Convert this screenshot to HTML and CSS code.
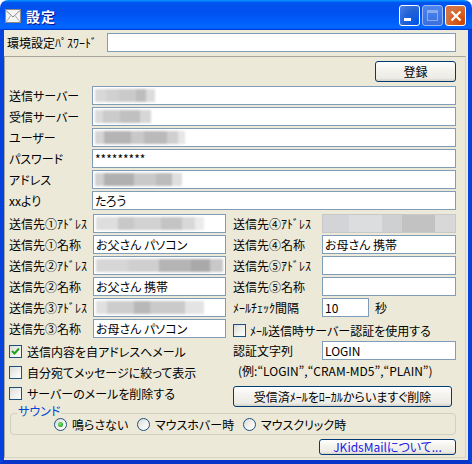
FILE: index.html
```html
<!DOCTYPE html>
<html lang="ja">
<head>
<meta charset="utf-8">
<title>設定</title>
<link rel="stylesheet" href="styles.css">
</head>
<body>
<div class="window">
  <div class="titlebar">
    <svg class="appicon" width="16" height="14" viewBox="0 0 16 14">
      <rect x="0.5" y="0.5" width="15" height="13" fill="#f4f4f4" stroke="#8a8a8a"/>
      <polyline points="1,1.5 8,8 15,1.5" fill="none" stroke="#8a8a8a"/>
      <polyline points="1,13 6,6.5" fill="none" stroke="#b0b0b0"/>
      <polyline points="15,13 10,6.5" fill="none" stroke="#b0b0b0"/>
    </svg>
    <span class="title">設定</span>
    <div class="tbtns">
      <div class="tbtn min"><span class="minbar"></span></div>
      <div class="tbtn max disabled"><span class="maxbox"></span></div>
      <div class="tbtn close">
        <svg width="12" height="12" viewBox="0 0 12 12"><path d="M1.5 1.5 L10.5 10.5 M10.5 1.5 L1.5 10.5" stroke="#fff" stroke-width="2.2" fill="none"/></svg>
      </div>
    </div>
  </div>
  <div class="frame">
    <div class="client">
      <div class="toprow">
        <span class="toplabel">環境設定<span class="hw">ﾊﾟｽﾜｰﾄﾞ</span></span>
        <div class="tb topinput"></div>
      </div>
      <div class="panel">
        <div class="regrow"><div class="btn regbtn">登録</div></div>
        <div class="fields">
          <div class="row"><span class="lbl wide">送信サーバー</span><div class="tb full"><span class="blur b1"></span></div></div>
          <div class="row"><span class="lbl wide">受信サーバー</span><div class="tb full"><span class="blur b2"></span></div></div>
          <div class="row"><span class="lbl wide">ユーザー</span><div class="tb full"><span class="blur b3"></span></div></div>
          <div class="row"><span class="lbl wide">パスワード</span><div class="tb full">*********</div></div>
          <div class="row"><span class="lbl wide">アドレス</span><div class="tb full"><span class="blur b4"></span></div></div>
          <div class="row"><span class="lbl wide">xxより</span><div class="tb full">たろう</div></div>
        </div>
        <div class="cols">
          <div class="col left">
            <div class="row"><span class="lbl lw">送信先①<span class="hw">ｱﾄﾞﾚｽ</span></span><div class="tb half"><span class="blur b5"></span></div></div>
            <div class="row"><span class="lbl lw">送信先①名称</span><div class="tb half">お父さん パソコン</div></div>
            <div class="row"><span class="lbl lw">送信先②<span class="hw">ｱﾄﾞﾚｽ</span></span><div class="tb half"><span class="blur b6"></span></div></div>
            <div class="row"><span class="lbl lw">送信先②名称</span><div class="tb half">お父さん 携帯</div></div>
            <div class="row"><span class="lbl lw">送信先③<span class="hw">ｱﾄﾞﾚｽ</span></span><div class="tb half"><span class="blur b7"></span></div></div>
            <div class="row"><span class="lbl lw">送信先③名称</span><div class="tb half">お母さん パソコン</div></div>
            <div class="checks">
              <label class="cb"><span class="box"><svg width="11" height="11" viewBox="0 0 11 11"><polyline points="2,5 4.5,7.5 9,2.5" fill="none" stroke="#21a121" stroke-width="2"/></svg></span>送信内容を自アドレスへメール</label>
              <label class="cb"><span class="box"></span>自分宛てメッセージに絞って表示</label>
              <label class="cb"><span class="box"></span>サーバーのメールを削除する</label>
            </div>
          </div>
          <div class="col right">
            <div class="row"><span class="lbl rw">送信先④<span class="hw">ｱﾄﾞﾚｽ</span></span><div class="tb rhalf blurbox"></div></div>
            <div class="row"><span class="lbl rw">送信先④名称</span><div class="tb rhalf">お母さん 携帯</div></div>
            <div class="row"><span class="lbl rw">送信先⑤<span class="hw">ｱﾄﾞﾚｽ</span></span><div class="tb rhalf"></div></div>
            <div class="row"><span class="lbl rw">送信先⑤名称</span><div class="tb rhalf"></div></div>
            <div class="row"><span class="lbl rw"><span class="hw">ﾒｰﾙﾁｪｯｸ</span>間隔</span><div class="tb short">10</div><span class="unit">秒</span></div>
            <label class="cb authcb"><span class="box"></span><span class="hw">ﾒｰﾙ</span>送信時サーバー認証を使用する</label>
            <div class="row"><span class="lbl rw">認証文字列</span><div class="tb rhalf">LOGIN</div></div>
            <div class="example">(例:“LOGIN”,“CRAM-MD5”,“PLAIN”)</div>
            <div class="btn delbtn">受信済<span class="hw">ﾒｰﾙ</span>を<span class="hw">ﾛｰｶﾙ</span>からいますぐ削除</div>
          </div>
        </div>
        <div class="group">
          <span class="legend">サウンド</span>
          <label class="radio r1"><span class="dot on"></span>鳴らさない</label>
          <label class="radio r2"><span class="dot"></span>マウスホバー時</label>
          <label class="radio r3"><span class="dot"></span>マウスクリック時</label>
        </div>
        <div class="aboutrow"><div class="btn aboutbtn">JKidsMailについて...</div></div>
      </div>
    </div>
  </div>
</div>
</body>
</html>
```
FILE: styles.css
```css
* { box-sizing: border-box; }
html, body { margin: 0; padding: 0; }
body {
  width: 472px;
  height: 464px;
  background: #ffffff;
  font-family: "Noto Sans CJK JP", "Noto Sans", sans-serif;
  font-size: 12px;
  color: #000;
  font-feature-settings: "palt";
  overflow: hidden;
}
.hw { font-feature-settings: normal; }
.window {
  width: 472px;
  height: 464px;
  display: flex;
  flex-direction: column;
}
.titlebar {
  height: 30px;
  flex: none;
  border-radius: 8px 8px 0 0;
  background: linear-gradient(180deg, #0997ff 0, #0053ee 9%, #0050ee 40%, #0066ff 86%, #0066ff 92%, #005bff 95%, #003dd7 97%, #003dd7 100%);
  display: flex;
  align-items: center;
  padding: 0 6px 0 5px;
}
.appicon { flex: none; margin-top: 1px; }
.title {
  color: #fff;
  font-weight: bold;
  font-size: 14px;
  margin-left: 5px;
  margin-top: 1px;
  text-shadow: 1px 1px 0 #0f1089;
  letter-spacing: 1px;
}
.tbtns {
  margin-left: auto;
  display: flex;
  gap: 2px;
  margin-top: 1px;
}
.tbtn {
  width: 21px;
  height: 21px;
  border: 1px solid #fff;
  border-radius: 3px;
  background: radial-gradient(circle at 90% 90%, #0054e9 0, #2263d5 55%, #4479e4 90%, #3c81f3 100%);
  position: relative;
  display: flex;
  align-items: center;
  justify-content: center;
}
.tbtn.disabled {
  border-color: #9db8f0;
  background: linear-gradient(180deg, #4d86ee, #3a6fe0);
}
.minbar {
  position: absolute;
  left: 4px;
  top: 12px;
  width: 7px;
  height: 3px;
  background: #fff;
}
.maxbox {
  width: 11px;
  height: 11px;
  border: 1px solid #8cabee;
  border-top-width: 3px;
}
.tbtn.close {
  background: radial-gradient(circle at 90% 90%, #cc4600 0, #dc6527 55%, #cd7546 68%, #e86a3a 100%);
}
.frame {
  flex: 1;
  border-left: 4px solid #0842dc;
  border-right: 4px solid #0842dc;
  border-bottom: 4px solid #0736c8;
  display: flex;
}
.client {
  flex: 1;
  background: #ece9d8;
  display: flex;
  flex-direction: column;
}
.toprow {
  height: 26px;
  flex: none;
  display: flex;
  align-items: flex-start;
  padding: 3px 0 0 3px;
}
.toplabel {
  width: 100px;
  line-height: 19px;
  white-space: nowrap;
}
.tb {
  height: 19px;
  border: 1px solid #7f9db9;
  background: #fff;
  display: flex;
  align-items: center;
  padding: 0 2px;
  white-space: nowrap;
  line-height: 17px;
}
.topinput { width: 349px; }
.panel {
  flex: 1;
  margin: 0 2px 2px 0;
  border: 1px solid #a7a69c;
  border-right-color: #d6d3c5;
  border-bottom-color: #d6d3c5;
  padding: 4px 9px 0 4px;
  display: flex;
  flex-direction: column;
}
.regrow { display: flex; justify-content: flex-end; }
.btn {
  border: 1px solid #003c74;
  border-radius: 3px;
  background: linear-gradient(180deg, #ffffff 0, #f4f3ee 40%, #ecebe6 85%, #d6d0c5 100%);
  display: flex;
  align-items: center;
  justify-content: center;
  white-space: nowrap;
}
.regbtn { width: 81px; height: 21px; }
.fields {
  margin-top: 4px;
  display: flex;
  flex-direction: column;
  gap: 2px;
}
.row {
  display: flex;
  align-items: center;
  height: 19px;
  flex: none;
}
.lbl { white-space: nowrap; flex: none; }
.wide { width: 83px; }
.full { width: 364px; }
.cols {
  margin-top: 4px;
  display: flex;
  gap: 7px;
}
.col {
  display: flex;
  flex-direction: column;
  gap: 2px;
}
.left { width: 217px; }
.right { width: 223px; }
.lw { width: 84px; }
.half { width: 133px; }
.rw { width: 89px; }
.rhalf { width: 134px; }
.short { width: 47px; }
.unit { margin-left: 6px; }
.blur {
  display: block;
  height: 13px;
  filter: blur(0.8px);
}
.b1 { width: 60px; background: linear-gradient(90deg, #d8d8d8 0 18%, #d0d0d0 18% 40%, #cacaca 40% 68%, #bdbdbd 68% 85%, #dcdcdc 85%); }
.b2 { width: 56px; background: linear-gradient(90deg, #dadada 0 15%, #cbcbcb 15% 45%, #c0c0c0 45% 80%, #d6d6d6 80%); }
.b3 { width: 90px; background: linear-gradient(90deg, #d4d4d4 0 10%, #b4b4b4 10% 40%, #c8c8c8 40% 55%, #bababa 55% 80%, #cfcfcf 80% 92%, #e6e6e6 92%); }
.b4 { width: 87px; background: linear-gradient(90deg, #d0d0d0 0 10%, #b0b0b0 10% 45%, #c9c9c9 45% 70%, #bcbcbc 70% 88%, #dedede 88%); }
.b5 { width: 108px; background: linear-gradient(90deg, #dedede 0 20%, #c8c8c8 20% 35%, #d2d2d2 35% 60%, #c4c4c4 60% 80%, #d8d8d8 80% 92%, #ececec 92%); }
.b6 { width: 128px; background: linear-gradient(90deg, #d6d6d6 0 25%, #cfcfcf 25% 50%, #b4b4b4 50% 75%, #a9a9a9 75% 90%, #c8c8c8 90%); }
.b7 { width: 108px; background: linear-gradient(90deg, #e0e0e0 0 10%, #cdcdcd 10% 35%, #b8b8b8 35% 50%, #cacaca 50% 82%, #e4e4e4 82%); }
.blurbox {
  border-color: #c8c8c8;
  background: linear-gradient(90deg, #d2d4d8 0 20%, #dcdddf 20% 45%, #cfd0d2 45% 60%, #c2c2c2 60% 85%, #d8d8d8 85%);
  filter: blur(0.6px);
}
.checks {
  margin-top: 1px;
  display: flex;
  flex-direction: column;
}
.cb {
  display: flex;
  align-items: center;
  height: 21px;
  white-space: nowrap;
}
.box {
  width: 13px;
  height: 13px;
  flex: none;
  border: 1px solid #1c5180;
  background: linear-gradient(135deg, #dcdcd7 0, #f2f2ef 60%, #ffffff 100%);
  margin-right: 5px;
  display: flex;
  align-items: center;
  justify-content: center;
}
.authcb { height: 18px; margin-top: 2px; margin-left: 0; }
.authcb .box { margin-right: 4px; }
.example {
  height: 18px;
  line-height: 18px;
  padding-left: 5px;
  white-space: nowrap;
}
.delbtn {
  width: 219px;
  height: 21px;
  margin-top: 4px;
}
.group {
  position: relative;
  margin: 6px 0 0 1px;
  height: 22px;
  border: 1px solid #d0d0bf;
  border-radius: 4px;
  display: flex;
  align-items: center;
  padding-left: 43px;
}
.legend {
  position: absolute;
  left: 6px;
  top: -10px;
  line-height: 14px;
  padding: 0 1px;
  background: #ece9d8;
  color: #0046d5;
}
.radio {
  display: flex;
  align-items: center;
  white-space: nowrap;
}
.r1 { width: 83px; }
.r2 { width: 106px; }
.dot {
  width: 13px;
  height: 13px;
  border-radius: 50%;
  border: 1px solid #1c5180;
  background: linear-gradient(135deg, #dcdcd7 0, #f4f4f0 60%, #fff 100%);
  margin-right: 5px;
  display: flex;
  align-items: center;
  justify-content: center;
  flex: none;
}
.dot.on::after {
  content: "";
  width: 5px;
  height: 5px;
  border-radius: 50%;
  background: radial-gradient(circle at 40% 40%, #8ee88a 0, #2fb02a 60%, #1e9a1a 100%);
}
.aboutrow {
  display: flex;
  justify-content: flex-end;
  margin-top: 4px;
}
.aboutbtn {
  width: 137px;
  height: 16px;
  color: #1a1ae6;
  font-size: 12px;
  line-height: 14px;
}
```
